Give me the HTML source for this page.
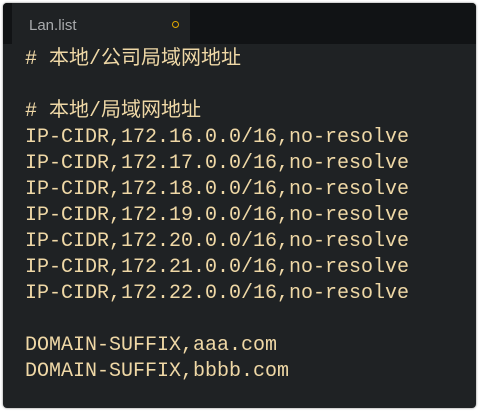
<!DOCTYPE html>
<html><head><meta charset="utf-8"><style>
html,body{margin:0;padding:0;background:#fff;width:479px;height:411px;overflow:hidden}
.win{position:absolute;left:3px;top:3px;width:473px;height:405px;background:#1f2224;border-radius:4px;overflow:hidden;box-shadow:0 0 2px rgba(0,0,0,.5)}
.bar{position:absolute;left:0;top:0;width:100%;height:41px;background:#111315}
.tab{position:absolute;left:9px;top:0;width:178px;height:41px;background:#1f2224}
.tab span{position:absolute;left:17px;top:14px;font:15px "Liberation Sans",sans-serif;color:#a9abad}
.dot{position:absolute;left:160px;top:18px;width:5px;height:5px;border:1.5px solid #e0a800;border-radius:50%}
pre{position:absolute;left:22px;top:44px;margin:0;font:20px/26px "Liberation Mono","Noto Sans CJK SC",monospace;color:#efd8a6}
</style></head><body>
<div class="win">
<div class="bar"><div class="tab"><span>Lan.list</span><div class="dot"></div></div></div>
<pre># 本地/公司局域网地址

# 本地/局域网地址
IP-CIDR,172.16.0.0/16,no-resolve
IP-CIDR,172.17.0.0/16,no-resolve
IP-CIDR,172.18.0.0/16,no-resolve
IP-CIDR,172.19.0.0/16,no-resolve
IP-CIDR,172.20.0.0/16,no-resolve
IP-CIDR,172.21.0.0/16,no-resolve
IP-CIDR,172.22.0.0/16,no-resolve

DOMAIN-SUFFIX,aaa.com
DOMAIN-SUFFIX,bbbb.com</pre>
</div>
</body></html>
